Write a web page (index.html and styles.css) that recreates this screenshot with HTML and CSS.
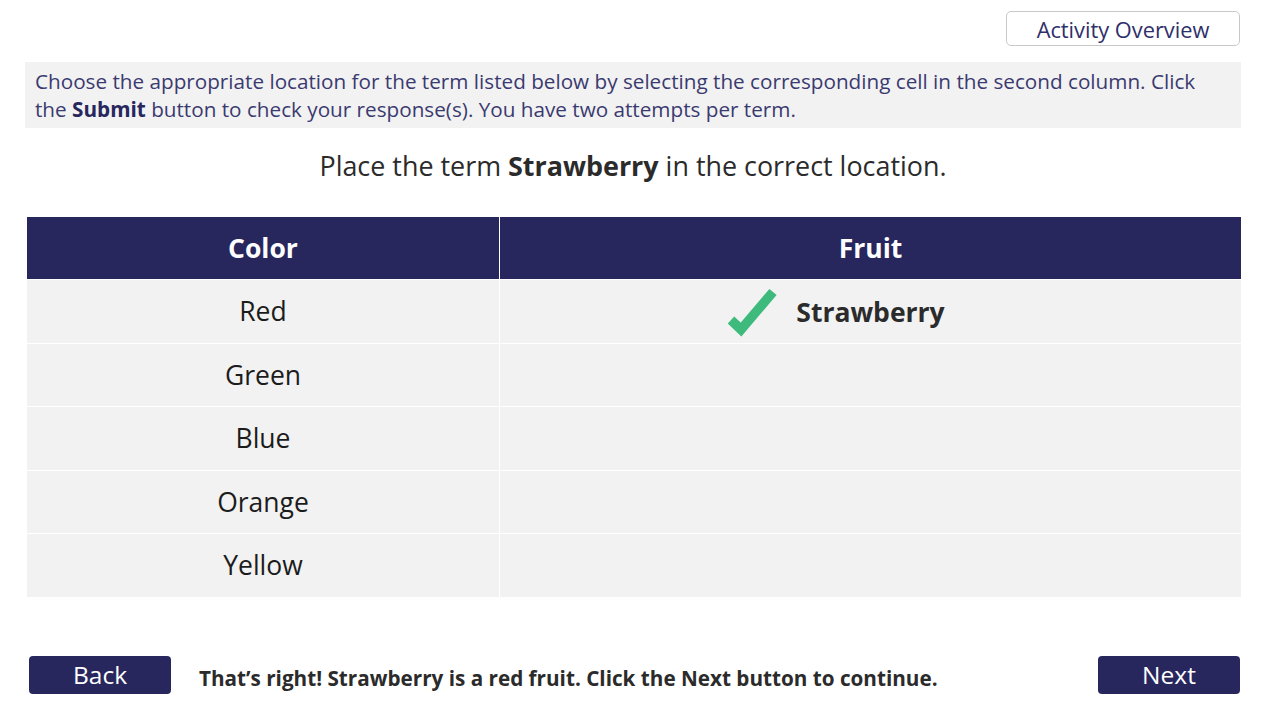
FILE: index.html
```html
<!DOCTYPE html>
<html>
<head>
<meta charset="utf-8">
<link rel="stylesheet" href="styles.css">
</head>
<body>
<div class="page">
  <div class="topbar">
    <button class="overview">Activity Overview</button>
  </div>
  <div class="instructions">Choose the appropriate location for the term listed below by selecting the corresponding cell in the second column. Click the <b>Submit</b> button to check your response(s). You have two attempts per term.</div>
  <h1 class="prompt">Place the term <b>Strawberry</b> in the correct location.</h1>
  <div class="table">
    <div class="row head">
      <div class="cell c1">Color</div>
      <div class="cell c2">Fruit</div>
    </div>
    <div class="row">
      <div class="cell c1">Red</div>
      <div class="cell c2 answer">
        <span class="term">
          <svg class="check" width="64" height="54" viewBox="0 0 64 54"><polyline points="11,35 21,44.5 53,7" fill="none" stroke="#3dba7c" stroke-width="9.5" stroke-linejoin="miter" stroke-miterlimit="10"/></svg>
          Strawberry
        </span>
      </div>
    </div>
    <div class="row"><div class="cell c1">Green</div><div class="cell c2"></div></div>
    <div class="row"><div class="cell c1">Blue</div><div class="cell c2"></div></div>
    <div class="row"><div class="cell c1">Orange</div><div class="cell c2"></div></div>
    <div class="row"><div class="cell c1">Yellow</div><div class="cell c2"></div></div>
  </div>
  <div class="footer">
    <button class="nav">Back</button>
    <div class="feedback">That’s right! Strawberry is a red fruit. Click the Next button to continue.</div>
    <button class="nav">Next</button>
  </div>
</div>
</body>
</html>
```
FILE: styles.css
```css
html, body {
  margin: 0;
  padding: 0;
  background: #fff;
}
body {
  font-family: "Open Sans", "Noto Sans", sans-serif;
  width: 1267px;
  height: 712px;
  overflow: hidden;
}
.page {
  padding: 11px 26px 0 25px;
}
.topbar {
  display: flex;
  justify-content: flex-end;
  height: 35px;
}
.overview {
  width: 234px;
  height: 35px;
  border: 1px solid #c9c9c9;
  border-radius: 5px;
  background: #fff;
  font-family: inherit;
  font-size: 21.8px;
  color: #2f2f6a;
  padding: 2px 0 0 0;
  margin-right: 1px;
  cursor: pointer;
}
.instructions {
  margin-top: 16px;
  background: #f2f2f2;
  padding: 5px 10px 4px 10px;
  height: 57px;
  font-size: 20.7px;
  line-height: 28px;
  color: #3a3a70;
}
.instructions b {
  color: #27275e;
}
.prompt {
  margin: 21px 0 0 0;
  text-align: center;
  font-weight: normal;
  font-size: 26.9px;
  line-height: 34px;
  color: #2b2b2b;
  height: 34px;
}
.prompt b {
  font-weight: bold;
}
.table {
  margin: 34px 0 0 2px;
  width: 1214px;
  display: flex;
  flex-direction: column;
  gap: 1px;
  background: #fff;
}
.row {
  display: flex;
  gap: 1px;
  height: 62.5px;
}
.cell {
  background: #f2f2f2;
  display: flex;
  align-items: center;
  justify-content: center;
  font-size: 26.5px;
  color: #1c1c1c;
}
.c1 { width: 472px; }
.c2 { flex: 1; }
.head { height: 62px; }
.head .cell {
  background: #27275e;
  color: #fff;
  font-weight: bold;
}
.answer {
  font-weight: bold;
  color: #2b2b2b;
}
.term {
  position: relative;
  line-height: 35px;
  padding-top: 2px;
}
.check {
  position: absolute;
  left: -76px;
  top: -8px;
}
.footer {
  margin-top: 59px;
  display: flex;
  align-items: center;
  padding: 0 1px 0 4px;
}
.nav {
  width: 142px;
  height: 38px;
  background: #27275e;
  color: #fff;
  border: none;
  border-radius: 4px;
  font-family: inherit;
  font-size: 24.5px;
  padding: 0;
  cursor: pointer;
}
.feedback {
  flex: 1;
  margin-left: 28px;
  padding-top: 6px;
  font-size: 20.7px;
  font-weight: bold;
  color: #2b2b2b;
}
```
